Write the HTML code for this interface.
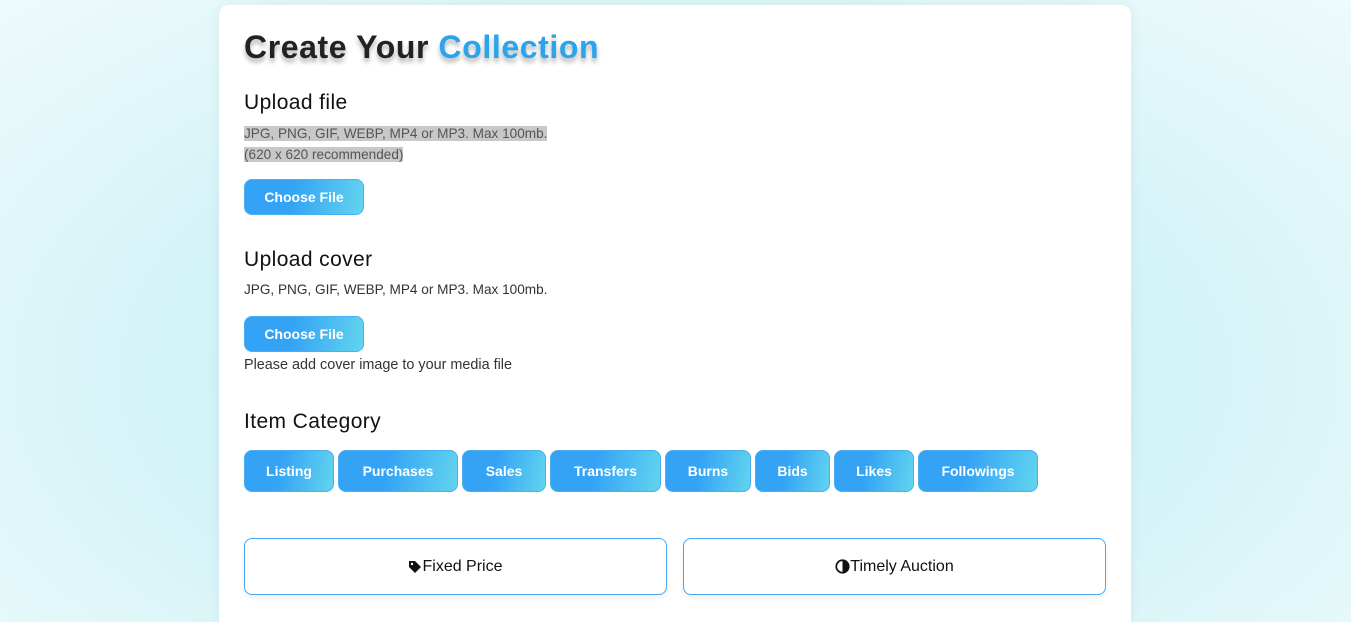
<!DOCTYPE html>
<html><head><style>
html,body{margin:0;width:1351px;height:622px;overflow:hidden}
body{font-family:"Liberation Sans",sans-serif;background:radial-gradient(ellipse at 50% 60%,#bfeef5 0%,#d2f3f7 50%,#eefafb 100%);position:relative}
.card{position:absolute;left:219px;top:5px;width:912px;height:617px;background:#fff;border-radius:10px 10px 0 0;box-shadow:0 0 12px rgba(0,0,0,.06)}
.a{position:absolute}
h1{position:absolute;left:244px;top:29px;margin:0;font-size:32px;font-weight:bold;color:#222;text-shadow:0 4px 5px rgba(0,0,0,.3);letter-spacing:.6px}
h1 span{color:#2aa4ec}
.h{font-size:21px;color:#111;letter-spacing:.4px}
.s{font-size:14px;color:#333}
.btn{position:absolute;height:42px;top:450px;border-radius:8px;background:linear-gradient(100deg,#34a3f5 40%,#62d4ee);border:1px solid #4aaef0;box-sizing:border-box;color:#fff;font-weight:bold;font-size:14px;display:flex;align-items:center;justify-content:center}
.cf{position:absolute;left:244px;width:120px;height:36px;border-radius:8px;background:linear-gradient(100deg,#34a3f5 40%,#62d4ee);border:1px solid #4aaef0;box-sizing:border-box;color:#fff;font-weight:bold;font-size:14px;display:flex;align-items:center;justify-content:center}
.opt{position:absolute;top:538px;width:423px;height:57px;border:1px solid #4aa6f0;border-radius:8px;box-sizing:border-box;display:flex;align-items:center;justify-content:center;font-size:16px;color:#111;box-shadow:0 3px 6px rgba(0,0,0,.06)}
</style></head><body>
<div class="card"></div>
<h1>Create Your <span>Collection</span></h1>
<div class="a h" style="left:244px;top:91px">Upload file</div>
<div class="a s" style="left:244px;top:123px;line-height:21px;color:#555;font-size:13.6px"><span style="background:#c8c8c8">JPG, PNG, GIF, WEBP, MP4 or MP3. Max 100mb.</span><br><span style="background:#c8c8c8">(620 x 620 recommended)</span></div>
<div class="cf" style="top:179px">Choose File</div>
<div class="a h" style="left:244px;top:248px">Upload cover</div>
<div class="a s" style="left:244px;top:282px;font-size:13.6px">JPG, PNG, GIF, WEBP, MP4 or MP3. Max 100mb.</div>
<div class="cf" style="top:316px">Choose File</div>
<div class="a s" style="left:244px;top:357px;font-size:14.4px">Please add cover image to your media file</div>
<div class="a h" style="left:244px;top:410px">Item Category</div>
<div class="btn" style="left:244px;width:90px">Listing</div>
<div class="btn" style="left:338px;width:120px">Purchases</div>
<div class="btn" style="left:462px;width:84px">Sales</div>
<div class="btn" style="left:550px;width:111px">Transfers</div>
<div class="btn" style="left:665px;width:86px">Burns</div>
<div class="btn" style="left:755px;width:75px">Bids</div>
<div class="btn" style="left:834px;width:80px">Likes</div>
<div class="btn" style="left:918px;width:120px">Followings</div>
<div class="opt" style="left:244px"><svg width="14" height="14" viewBox="0 0 14 14"><path d="M1 1h6l6 6-6 6-6-6z" fill="#111"/><circle cx="4" cy="4" r="1.2" fill="#fff"/></svg>Fixed Price</div>
<div class="opt" style="left:683px"><svg width="15" height="15" viewBox="0 0 14 14"><circle cx="7" cy="7" r="5.8" fill="none" stroke="#111" stroke-width="1.6"/><path d="M7 1.2v11.6A5.8 5.8 0 0 0 7 1.2z" fill="#111"/></svg>Timely Auction</div>
</body></html>
